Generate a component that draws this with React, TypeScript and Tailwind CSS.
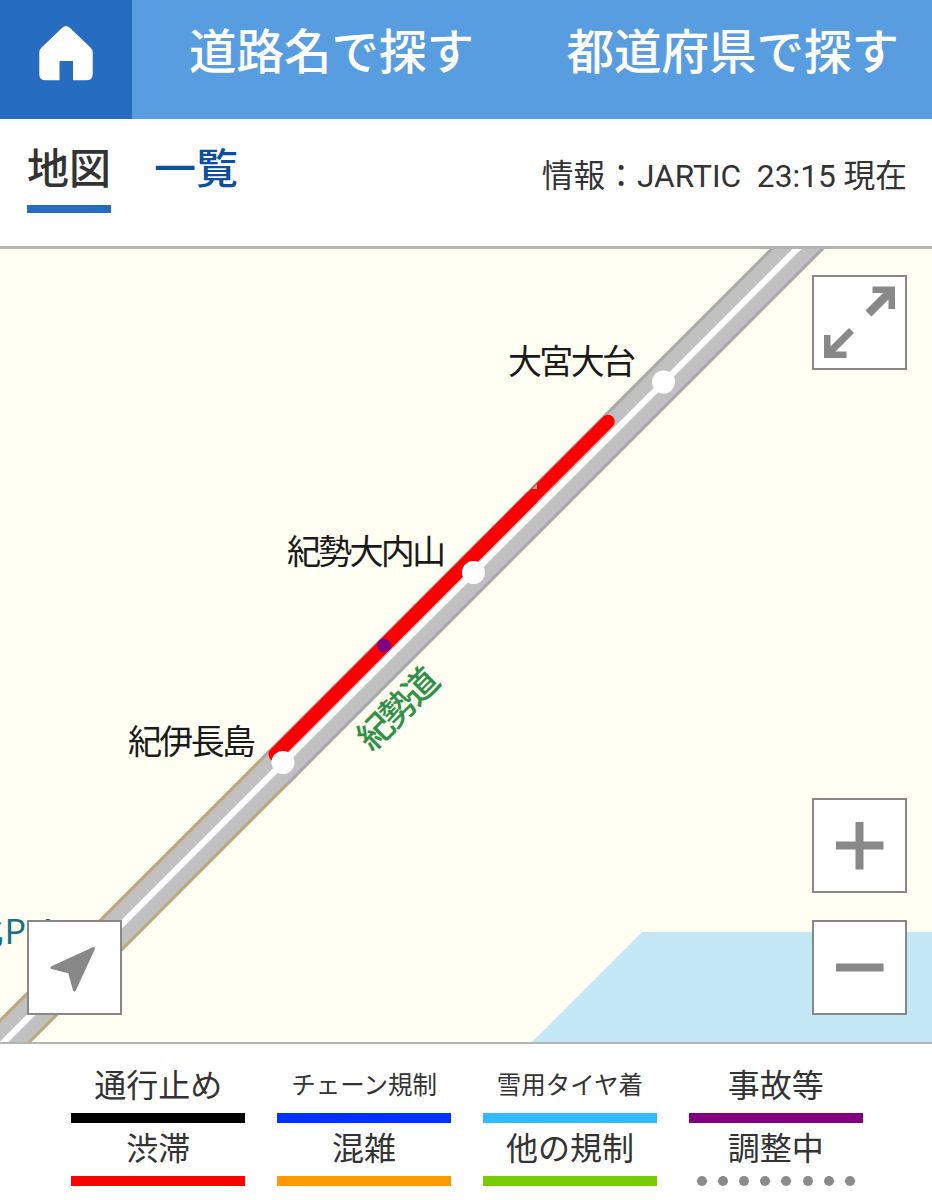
import type { ReactNode } from "react"

const legend = [
  { label: "通行止め", bar: "bg-black" },
  { label: "チェーン規制", bar: "bg-[#0033ff]", small: true },
  { label: "雪用タイヤ着", bar: "bg-[#33bbff]", small: true },
  { label: "事故等", bar: "bg-[#800080]" },
  { label: "渋滞", bar: "bg-[#ff0000]" },
  { label: "混雑", bar: "bg-[#ff9900]" },
  { label: "他の規制", bar: "bg-[#77cc00]" },
  { label: "調整中", dotted: true },
]

const interchanges = [
  { name: "大宮大台", x: 663.5, y: 134, labelX: 508, labelY: 125.5, width: 128 },
  { name: "紀勢大内山", x: 473.5, y: 324.5, labelX: 287, labelY: 315.5, width: 159 },
  { name: "紀伊長島", x: 283, y: 514.5, labelX: 128, labelY: 505.5, width: 128 },
]

function MapButton({
  label,
  className,
  children,
}: {
  label: string
  className: string
  children: ReactNode
}) {
  return (
    <button
      aria-label={label}
      className={`absolute size-[95px] border-2 border-[#888] bg-white ${className}`}
    >
      <svg viewBox="0 0 91 91" className="size-full" fill="#888">
        {children}
      </svg>
    </button>
  )
}

function Header() {
  return (
    <header className="flex h-[119px] bg-[#599de1] text-white">
      <a
        href="#"
        aria-label="ホーム"
        className="flex w-[132px] justify-center bg-[#266dc1] pt-[26px]"
      >
        <svg viewBox="0 0 54 55" className="h-[55px] w-[54px]" fill="currentColor">
          <path d="M23.500 1.500Q27-1.500 30.500 1.500L51.500 21.500Q53.700 23.500 53.700 26.500V48Q53.700 54.300 47.500 54.300H34V35H20.500V54.300H6.500Q0.300 54.300 0.300 48V26.500Q0.300 23.500 2.500 21.500Z" />
        </svg>
      </a>
      <nav className="flex flex-1 justify-between pr-[33px] pl-[57px] text-[47.500px] leading-[107px] font-medium whitespace-nowrap">
        <a href="#">道路名で探す</a>
        <a href="#">都道府県で探す</a>
      </nav>
    </header>
  )
}

function Tabs() {
  return (
    <div className="flex h-[127px] items-start justify-between pr-[25px] pl-[27px] whitespace-nowrap">
      <div className="flex gap-[43px] pt-[19px] text-[42px] leading-[63px] font-medium">
        <span className="h-[75px] border-b-8 border-[#266dc1] text-[#333]">地図</span>
        <a href="#" className="text-[#0b4ea2]">
          一覧
        </a>
      </div>
      <p className="pt-[33px] text-[31.700px] leading-[49px] whitespace-pre text-[#333]">
        情報：JARTIC&nbsp; 23:15 現在
      </p>
    </div>
  )
}

function TrafficMap() {
  return (
    <main className="relative h-[798px] overflow-hidden border-t-[3px] border-b-2 border-[#b4b4b2] bg-[#fffff3]">
      <svg
        viewBox="0 1 932 793"
        className="block h-[793px] w-[932px] font-['Noto_Sans_CJK_JP',sans-serif]"
      >
        <path d="M642 684H932V794H532Z" fill="#c3e7f5" />

        {/* road bed: casing, surface, centre line */}
        <path d="M-60 858L283 515" stroke="#bda77b" strokeWidth="39" />
        <path d="M275 523L857-59" stroke="#a9a9a9" strokeWidth="39" />
        <path d="M-60 858L857-59" stroke="#c0c0c0" strokeWidth="33" />
        <path d="M-60 858L857-59" stroke="#fff" strokeWidth="6.400" />

        {/* congestion */}
        <g stroke="#f00" strokeLinecap="round">
          <path d="M275.500 506.500L531 250.500" strokeWidth="14" />
          <path d="M531 250.500L608 173.500" strokeWidth="13.500" />
        </g>
        <path d="M532 241L537 236V241Z" fill="#b5aaa8" />
        <circle cx="384" cy="397.500" r="7" fill="#800080" />

        {interchanges.map((ic) => (
          <g key={ic.name}>
            <circle cx={ic.x} cy={ic.y} r="11.500" fill="#fff" />
            <text
              x={ic.labelX}
              y={ic.labelY}
              textLength={ic.width}
              fontSize="34"
              fill="#1a1a1a"
            >
              {ic.name}
            </text>
          </g>
        ))}

        <text
          transform="translate(372 504.500) rotate(-45)"
          textLength="99"
          fontSize="35"
          fontWeight="500"
          fill="#2f9145"
        >
          紀勢道
        </text>
        <text x="-31 4.500 37.500" y="696" fontSize="34" fill="#187083">
          北PA
        </text>
      </svg>

      <MapButton label="全画面" className="top-[26px] right-[25px]">
        <path d="M58.500 9.500H81V32H74.500V22.500L57.500 39.500L51.500 33.500L69 16H58.500Z" />
        <path d="M10 58H16.500V69.500L35 51L40 56L21.500 74.500H32.500V81H10Z" />
      </MapButton>
      <MapButton label="拡大" className="right-[25px] bottom-[149px]">
        <path d="M22 41.500H41.500V22H49.500V41.500H69.500V49.500H49.500V69.500H41.500V49.500H22Z" />
      </MapButton>
      <MapButton label="縮小" className="right-[25px] bottom-[27px]">
        <path d="M22 41.500H69.500V49.500H22Z" />
      </MapButton>
      <MapButton label="現在地" className="bottom-[27px] left-[27px]">
        <path
          d="M64.500 26.500L45.500 68L40.500 50L23 45.500Z"
          stroke="#888"
          strokeWidth="3"
          strokeLinejoin="round"
        />
      </MapButton>
    </main>
  )
}

function Legend() {
  return (
    <footer className="h-[156px] pr-[69px] pl-[71px] pt-[16px]">
      <ul className="grid grid-cols-4 gap-x-[31.500px] text-center whitespace-nowrap text-[#333]">
        {legend.map((item) => (
          <li key={item.label} className="h-[63px]">
            <div
              className={
                item.small
                  ? "h-[53px] text-[24.500px] leading-[52px]"
                  : "h-[53px] text-[32px] leading-[52px]"
              }
            >
              {item.label}
            </div>
            {item.dotted ? (
              <div className="flex h-[10px] justify-between px-[8px]">
                {Array.from({ length: 8 }, (_, i) => (
                  <span key={i} className="size-[10px] shrink-0 rounded-full bg-[#8b8b8b]" />
                ))}
              </div>
            ) : (
              <div className={`h-[10px] ${item.bar}`} />
            )}
          </li>
        ))}
      </ul>
    </footer>
  )
}

export default function App() {
  return (
    <div className="h-[1200px] w-[932px] overflow-hidden bg-white font-[Roboto,'Noto_Sans_CJK_JP',sans-serif]">
      <Header />
      <Tabs />
      <TrafficMap />
      <Legend />
    </div>
  )
}
